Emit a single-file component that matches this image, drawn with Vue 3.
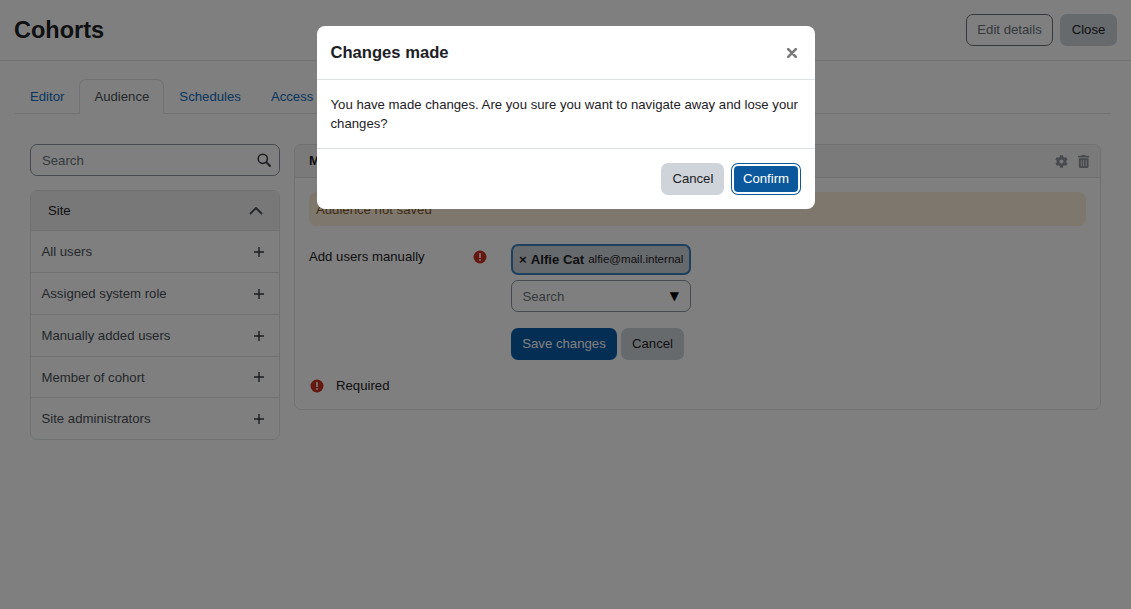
<script setup>
const tabs = [
  { label: 'Editor' },
  { label: 'Audience', active: true },
  { label: 'Schedules' },
  { label: 'Access' }
]
const rows = ['All users', 'Assigned system role', 'Manually added users', 'Member of cohort', 'Site administrators']
</script>

<template>
  <div class="page">
    <header class="top">
      <h1>Cohorts</h1>
      <div class="top-actions">
        <button class="btn outline">Edit details</button>
        <button class="btn secondary">Close</button>
      </div>
    </header>

    <main class="main">
      <nav class="tabs">
        <a v-for="t in tabs" :key="t.label" class="tab" :class="{ active: t.active }">{{ t.label }}</a>
      </nav>

      <div class="columns">
        <aside class="side">
          <div class="search">
            <span class="ph">Search</span>
            <svg class="search-ic" viewBox="0 0 14 14"><circle cx="5.8" cy="5.8" r="4.6" fill="none" stroke="#343a40" stroke-width="1.5"/><path d="M9.2 9.2l3.8 3.8" stroke="#343a40" stroke-width="1.9" stroke-linecap="round"/></svg>
          </div>
          <section class="list">
            <div class="list-head">
              <span>Site</span>
              <svg class="chev" viewBox="0 0 14 8"><path d="M1 7l6-6 6 6" fill="none" stroke="#495057" stroke-width="1.9"/></svg>
            </div>
            <div v-for="r in rows" :key="r" class="row">
              <span>{{ r }}</span>
              <svg class="plus" viewBox="0 0 10 10"><path d="M5 0v10M0 5h10" stroke="#343a40" stroke-width="1.4"/></svg>
            </div>
          </section>
        </aside>

        <section class="panel">
          <div class="panel-head">
            <strong>Manually added users</strong>
            <div class="panel-icons">
              <svg viewBox="0 0 512 512" class="gear"><path fill="#8f959e" d="M487.4 315.7l-42.6-24.6c4.3-23.2 4.3-47 0-70.2l42.6-24.6c4.9-2.8 7.1-8.6 5.5-14-11.1-35.6-30-67.8-54.7-94.6-3.8-4.1-10-5.1-14.8-2.3L380.8 110c-17.9-15.4-38.5-27.3-60.8-35.1V25.8c0-5.6-3.9-10.5-9.4-11.7-36.7-8.2-74.3-7.8-109.2 0-5.5 1.2-9.4 6.1-9.4 11.7V75c-22.2 7.9-42.8 19.8-60.8 35.1L88.7 85.5c-4.9-2.8-11-1.9-14.8 2.3-24.7 26.7-43.6 58.9-54.7 94.6-1.7 5.4.6 11.2 5.5 14L67.3 221c-4.3 23.2-4.3 47 0 70.2l-42.6 24.6c-4.9 2.8-7.1 8.6-5.5 14 11.1 35.6 30 67.8 54.7 94.6 3.8 4.1 10 5.1 14.8 2.3l42.6-24.6c17.9 15.4 38.5 27.3 60.8 35.1v49.2c0 5.6 3.9 10.5 9.4 11.7 36.7 8.2 74.3 7.8 109.2 0 5.5-1.2 9.4-6.1 9.4-11.7v-49.2c22.2-7.9 42.8-19.8 60.8-35.1l42.6 24.6c4.9 2.8 11 1.9 14.8-2.3 24.7-26.7 43.6-58.9 54.7-94.6 1.5-5.5-.7-11.3-5.6-14.1zM256 336c-44.1 0-80-35.9-80-80s35.9-80 80-80 80 35.9 80 80-35.9 80-80 80z"/></svg>
              <svg viewBox="0 0 448 512" class="trash"><path fill="#8f959e" d="M32 464a48 48 0 0 0 48 48h288a48 48 0 0 0 48-48V128H32zm272-256a16 16 0 0 1 32 0v224a16 16 0 0 1-32 0zm-96 0a16 16 0 0 1 32 0v224a16 16 0 0 1-32 0zm-96 0a16 16 0 0 1 32 0v224a16 16 0 0 1-32 0zM432 32H312l-9.4-18.7A24 24 0 0 0 281.1 0H166.8a23.72 23.72 0 0 0-21.4 13.3L136 32H16A16 16 0 0 0 0 48v32a16 16 0 0 0 16 16h416a16 16 0 0 0 16-16V48a16 16 0 0 0-16-16z"/></svg>
            </div>
          </div>
          <div class="panel-body">
            <div class="alert">Audience not saved</div>
            <div class="form-row">
              <div class="label-col">
                <span>Add users manually</span>
                <svg class="err" viewBox="0 0 14 14"><circle cx="7" cy="7" r="6.5" fill="#ca3120"/><rect x="6.2" y="3" width="1.6" height="5" rx=".6" fill="#fff"/><circle cx="7" cy="10" r=".9" fill="#fff"/></svg>
              </div>
              <div class="field-col">
                <div class="tag"><span class="x">×</span><b>Alfie Cat</b><small>alfie@mail.internal</small></div>
                <div class="select"><span class="ph">Search</span><span class="arrow">▼</span></div>
                <div class="form-btns">
                  <button class="btn primary save">Save changes</button>
                  <button class="btn secondary">Cancel</button>
                </div>
              </div>
            </div>
            <div class="required">
              <svg class="err" viewBox="0 0 14 14"><circle cx="7" cy="7" r="6.5" fill="#ca3120"/><rect x="6.2" y="3" width="1.6" height="5" rx=".6" fill="#fff"/><circle cx="7" cy="10" r=".9" fill="#fff"/></svg>
              <span>Required</span>
            </div>
          </div>
        </section>
      </div>
    </main>

    <div class="backdrop">
      <div class="modal">
        <div class="modal-head">
          <h2>Changes made</h2>
          <svg class="close" viewBox="0 0 10 10"><path d="M1.2 1.2l7.6 7.6M8.8 1.2l-7.6 7.6" stroke="#7a7a7a" stroke-width="2.6" stroke-linecap="round"/></svg>
        </div>
        <div class="modal-body">You have made changes. Are you sure you want to navigate away and lose your changes?</div>
        <div class="modal-foot">
          <button class="btn secondary">Cancel</button>
          <button class="btn primary focus">Confirm</button>
        </div>
      </div>
    </div>
  </div>
</template>

<style>
html, body { margin: 0; background: #fff; }
</style>

<style scoped>
.page {
  position: relative;
  width: 1131px;
  height: 609px;
  overflow: hidden;
  font-family: "Liberation Sans", Arial, sans-serif;
  font-size: 13.18px;
  line-height: 19.7px;
  color: #1d2125;
  background: #fff;
}
.top {
  height: 60px;
  box-sizing: content-box;
  border-bottom: 1px solid #dee2e6;
  display: flex;
  align-items: flex-start;
  justify-content: space-between;
  padding: 0 14px;
}
h1 {
  margin: 14px 0 0;
  font-size: 23.5px;
  line-height: 32px;
  font-weight: 700;
}
.top-actions {
  display: flex;
  gap: 7px;
  margin-top: 14px;
}
.btn {
  font: inherit;
  height: 32px;
  padding: 0 11px;
  border: 0;
  border-radius: 7px;
  color: #1d2125;
  box-sizing: border-box;
}
.outline {
  background: #fff;
  border: 1px solid #6a737b;
  color: #6a737b;
  width: 87px;
  padding: 0;
}
.secondary { background: #ced4da; }
.top-actions .secondary { width: 57px; padding: 0; }
.primary { background: #0b5ca8; color: #fff; }
.save { width: 106px; padding: 0; }

.main { padding: 18px 20px 0 15px; }
.tabs {
  display: flex;
  height: 34px;
  border-bottom: 1px solid #dee2e6;
  box-sizing: content-box;
}
.tab {
  color: #0f6cbf;
  border: 1px solid transparent;
  border-bottom: 0;
  height: 34px;
  box-sizing: border-box;
  padding: 7px 14px;
}
.tab.active {
  color: #495057;
  background: #fff;
  border-color: #dee2e6;
  border-radius: 7px 7px 0 0;
  height: 35px;
}
.columns {
  display: flex;
  gap: 14px;
  padding: 30px 10px 0 15px;
}
.side { width: 250px; flex: none; }
.search {
  height: 32px;
  box-sizing: border-box;
  border: 1px solid #8f959e;
  border-radius: 7px;
  display: flex;
  align-items: center;
  justify-content: space-between;
  padding: 1px 8px 0 11px;
}
.ph { color: #6a737b; }
.search-ic { width: 14px; height: 14px; margin-top: -1px; }
.list {
  margin-top: 14px;
  border: 1px solid #dee2e6;
  border-radius: 7px;
  overflow: hidden;
}
.list-head {
  height: 39.25px;
  box-sizing: content-box;
  display: flex;
  align-items: center;
  justify-content: space-between;
  padding: 0 16px 0 17px;
  background: #f0f1f2;
  border-bottom: 1px solid #dee2e6;
}
.chev { width: 14px; height: 8px; }
.row {
  height: 41.75px;
  box-sizing: border-box;
  display: flex;
  align-items: center;
  justify-content: space-between;
  padding: 1px 15px 0 10.5px;
  color: #495057;
  border-bottom: 1px solid #dee2e6;
}
.row:last-child { border-bottom: 0; height: 40.75px; }
.plus { width: 10px; height: 10px; }

.panel {
  flex: 1;
  height: 266px;
  box-sizing: border-box;
  border: 1px solid #dee2e6;
  border-radius: 7px;
  overflow: hidden;
}
.panel-head {
  height: 32px;
  box-sizing: content-box;
  background: #f4f5f6;
  border-bottom: 1px solid #dee2e6;
  display: flex;
  align-items: center;
  justify-content: space-between;
  padding: 0 10.5px 0 14px;
}
.panel-icons { display: flex; gap: 10px; align-items: center; }
.gear { width: 13px; height: 13px; }
.trash { width: 11.4px; height: 13px; }
.panel-body { padding: 14px 14px 0; }
.alert {
  height: 34px;
  box-sizing: border-box;
  padding: 8px 7px;
  margin-bottom: 18px;
  background: #fcefdc;
  color: #7d5a29;
  border-radius: 7px;
}
.form-row { display: flex; }
.label-col {
  width: 202px;
  flex: none;
  display: flex;
  align-items: flex-start;
  padding-top: 3px;
}
.label-col span { width: 164px; }
.label-col .err { margin-top: 3px; }
.err { width: 14px; height: 14px; flex: none; }
.field-col { width: 180px; }
.tag {
  height: 31px;
  box-sizing: border-box;
  border: 2px solid #3a7fc0;
  border-radius: 7px;
  background: #ced4da;
  display: flex;
  align-items: center;
  padding: 0 0 0 6px;
  white-space: nowrap;
}
.tag .x { font-weight: 700; margin-right: 4px; }
.tag b { font-weight: 700; margin-right: 4px; }
.tag small { font-size: 11.55px; }
.select {
  height: 32px;
  margin-top: 5px;
  box-sizing: border-box;
  border: 1px solid #8f959e;
  border-radius: 7px;
  display: flex;
  align-items: center;
  justify-content: space-between;
  padding: 1px 11px 0 10.5px;
}
.arrow { font-family: "DejaVu Sans", sans-serif; font-size: 12px; color: #000; }
.form-btns { display: flex; gap: 4px; margin-top: 16px; }
.required {
  display: flex;
  align-items: center;
  gap: 12px;
  margin-top: 16px;
  padding-left: 1px;
}

.backdrop {
  position: absolute;
  inset: 0;
  background: rgba(0, 0, 0, 0.5);
  display: flex;
  justify-content: center;
  align-items: flex-start;
}
.modal {
  width: 498px;
  margin-top: 26px;
  background: #fff;
  border-radius: 8px;
}
.modal-head {
  height: 54px;
  box-sizing: border-box;
  border-bottom: 1px solid #dee2e6;
  display: flex;
  align-items: center;
  justify-content: space-between;
  padding: 0 18px 0 14px;
}
h2 {
  margin: 0;
  font-size: 16.6px;
  font-weight: 700;
  line-height: 20px;
}
.close { width: 10px; height: 10px; }
.modal-body {
  height: 68px;
  box-sizing: border-box;
  padding: 14.7px 14px 0;
}
.modal-foot {
  height: 61px;
  box-sizing: border-box;
  border-top: 1px solid #dee2e6;
  display: flex;
  justify-content: flex-end;
  align-items: flex-start;
  gap: 10px;
  padding: 14px 17px 0 0;
}
.focus {
  height: 26px;
  margin: 3px 0 0;
  padding: 0 8.5px;
  border-radius: 4px;
  background: #0c589c;
  box-shadow: 0 0 0 2px #fff, 0 0 0 3px #0c589c;
}
</style>
